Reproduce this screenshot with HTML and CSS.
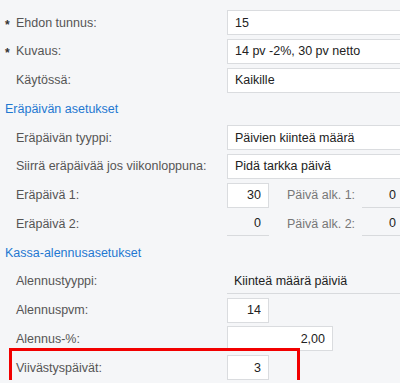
FILE: index.html
```html
<!DOCTYPE html>
<html lang="fi">
<head>
    <meta charset="UTF-8">
    <meta name="viewport" content="width=device-width, initial-scale=1.0">
    <title>Maksuehto</title>
    <link rel="stylesheet" href="styles.css">
</head>
<body>
    <form class="form">
        <div class="row">
            <label><span class="star">*</span>Ehdon tunnus:</label>
            <input class="field wide" type="text" value="15">
        </div>
        <div class="row">
            <label><span class="star">*</span>Kuvaus:</label>
            <input class="field wide" type="text" value="14 pv -2%, 30 pv netto">
        </div>
        <div class="row">
            <label>Käytössä:</label>
            <input class="field wide" type="text" value="Kaikille">
        </div>

        <div class="section">Eräpäivän asetukset</div>
        <div class="row">
            <label>Eräpäivän tyyppi:</label>
            <input class="field wide" type="text" value="Päivien kiinteä määrä">
        </div>
        <div class="row">
            <label>Siirrä eräpäivää jos viikonloppuna:</label>
            <input class="field wide" type="text" value="Pidä tarkka päivä">
        </div>
        <div class="row">
            <label>Eräpäivä 1:</label>
            <input class="field num" type="text" value="30">
            <span class="sub">Päivä alk. 1:</span>
            <input class="field num ro edge" type="text" value="0" readonly>
        </div>
        <div class="row">
            <label>Eräpäivä 2:</label>
            <input class="field num ro" type="text" value="0" readonly>
            <span class="sub">Päivä alk. 2:</span>
            <input class="field num ro edge" type="text" value="0" readonly>
        </div>

        <div class="section">Kassa-alennusasetukset</div>
        <div class="row">
            <label>Alennustyyppi:</label>
            <input class="field wide ro" type="text" value="Kiinteä määrä päiviä" readonly>
        </div>
        <div class="row">
            <label>Alennuspvm:</label>
            <input class="field num" type="text" value="14">
        </div>
        <div class="row">
            <label>Alennus-%:</label>
            <input class="field mid" type="text" value="2,00">
        </div>
        <div class="row mark">
            <label>Viivästyspäivät:</label>
            <input class="field num" type="text" value="3">
        </div>
    </form>
</body>
</html>
```

FILE: styles.css
```css
body {
    margin: 0;
    font-family: "Liberation Sans", Arial, sans-serif;
    font-size: 12.5px;
    color: #555;
    background-color: #f5f6f8;
    overflow: hidden;
}
.form {
    display: flex;
    flex-direction: column;
    gap: 3.75px;
    margin: 0;
    padding: 10px 0 0 5px;
}
.row {
    display: flex;
    align-items: center;
    height: 25px;
    position: relative;
}
.row label {
    display: flex;
    align-items: center;
    flex: none;
    width: 211px;
    padding-left: 11px;
    white-space: nowrap;
}
.star {
    flex: none;
    width: 11px;
    margin-left: -11px;
    padding-top: 4px;
    color: #333;
    font-weight: bold;
    font-size: 12px;
}
.section {
    height: 25px;
    display: flex;
    align-items: center;
    color: #1f78d1;
}
.field {
    flex: none;
    box-sizing: border-box;
    height: 25px;
    margin: 0;
    padding: 0 7px;
    border: 1px solid #dadcdf;
    border-radius: 0;
    background: #fff;
    font: inherit;
    color: #222;
    outline: none;
}
.wide {
    flex: 1;
    min-width: 0;
    border-right: 0;
}
.num {
    width: 42px;
    text-align: right;
}
.mid {
    width: 106px;
    text-align: right;
}
.ro {
    background: transparent;
    border: 0;
    border-bottom: 1px solid #d8dadd;
    padding: 0 8px 0 7px;
}
.edge {
    width: 38px;
    padding-right: 4px;
}
.sub {
    flex: none;
    width: 75px;
    margin-left: 18px;
    color: #777;
    white-space: nowrap;
}
/* highlight frame drawn over the last row */
.mark::after {
    content: "";
    position: absolute;
    left: 4px;
    top: -7px;
    width: 291px;
    height: 35px;
    box-sizing: border-box;
    border: 3px solid #f20000;
    pointer-events: none;
}
```
